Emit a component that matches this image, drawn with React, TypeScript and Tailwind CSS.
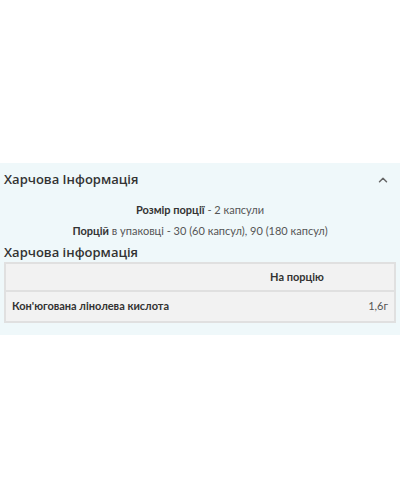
import { ChevronUp } from "lucide-react";

const App = () => (
  <div className="w-[400px] h-[500px] bg-white font-['Open_Sans',sans-serif] text-[#333]">
    <div className="h-[163px]" />
    <section className="bg-[#eff8fa] px-[4px] pb-[12px]">
      <div className="flex items-center justify-between h-[34px]">
        <h2 className="text-[13px] font-semibold">Харчова Інформація</h2>
        <ChevronUp className="w-[14px] h-[14px] mr-[6px] text-[#666]" strokeWidth={2.5} />
      </div>
      <div className="font-['Lato',sans-serif] text-[11px] text-[#555] leading-[20px]">
        <p className="text-center mt-[3px]">
          <span className="font-bold text-[#333]">Розмір порції</span> - 2 капсули
        </p>
        <p className="text-center mt-[1px]">
          <span className="font-bold text-[#333]">Порцій</span> в упаковці - 30 (60 капсул), 90 (180 капсул)
        </p>
      </div>
      <h3 className="text-[13px] font-semibold leading-[20px] mt-[1px]">Харчова інформація</h3>
      <div className="border-2 border-[#e0e0e0] bg-[#f2f2f2] font-['Lato',sans-serif] text-[11px]">
        <div className="flex h-[28px] items-center border-b-2 border-[#e0e0e0]">
          <div className="flex-1" />
          <div className="flex-1 text-center font-bold">На порцію</div>
        </div>
        <div className="flex h-[29px] items-center px-[6px]">
          <div className="flex-1 font-bold">Кон'югована лінолева кислота</div>
          <div className="text-[#555]">1,6г</div>
        </div>
      </div>
    </section>
  </div>
);

export default App;
